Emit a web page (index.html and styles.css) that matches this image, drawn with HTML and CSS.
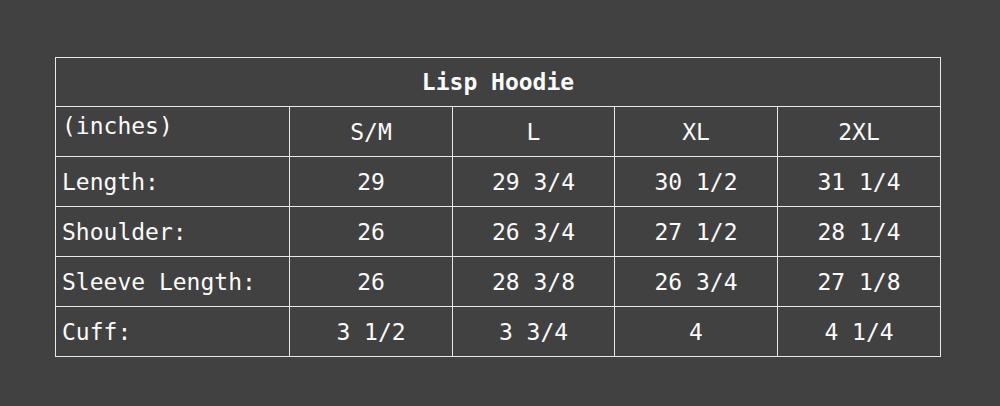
FILE: index.html
```html
<!DOCTYPE html>
<html>
<head>
<meta charset="utf-8">
<link rel="stylesheet" href="styles.css">
</head>
<body>
<div class="page">
<table class="sizes">
  <colgroup>
    <col class="c0"><col class="c1"><col class="c2"><col class="c3"><col class="c4">
  </colgroup>
  <tr><th class="title" colspan="5">Lisp Hoodie</th></tr>
  <tr class="head"><td class="label top">(inches)</td><td>S/M</td><td>L</td><td>XL</td><td>2XL</td></tr>
  <tr><td class="label">Length:</td><td>29</td><td>29 3/4</td><td>30 1/2</td><td>31 1/4</td></tr>
  <tr><td class="label">Shoulder:</td><td>26</td><td>26 3/4</td><td>27 1/2</td><td>28 1/4</td></tr>
  <tr><td class="label">Sleeve Length:</td><td>26</td><td>28 3/8</td><td>26 3/4</td><td>27 1/8</td></tr>
  <tr><td class="label">Cuff:</td><td>3 1/2</td><td>3 3/4</td><td>4</td><td>4 1/4</td></tr>
</table>
</div>
</body>
</html>
```
FILE: styles.css
```css
html, body {
  margin: 0;
  padding: 0;
  background: #414141;
}
.page {
  padding: 57px 0 0 55px;
}
.sizes {
  border-collapse: collapse;
  table-layout: fixed;
  width: 886px;
  font-family: "DejaVu Sans Mono", "Liberation Mono", monospace;
  font-size: 23px;
  color: #fafafa;
  white-space: pre;
}
.c0 { width: 234px; }
.c1 { width: 163px; }
.c2 { width: 162px; }
.c3 { width: 163px; }
.c4 { width: 163px; }
.sizes th, .sizes td {
  border: 1px solid #e8e8e8;
  height: 50px;
  padding: 0 6px;
  text-align: center;
  vertical-align: middle;
  box-sizing: border-box;
}
.sizes .title {
  font-weight: bold;
  height: 49px;
}
.sizes .label {
  text-align: left;
}
.sizes .top {
  vertical-align: top;
  padding-top: 6px;
}
```
